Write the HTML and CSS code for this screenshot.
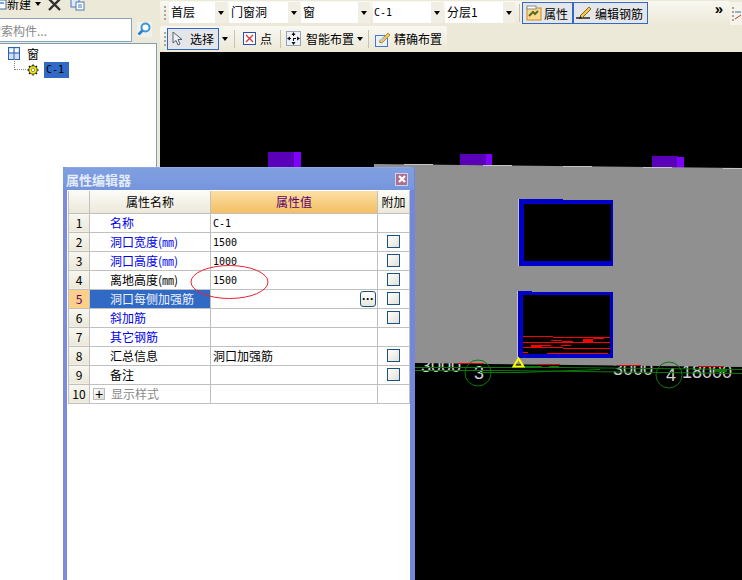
FILE: index.html
```html
<!DOCTYPE html>
<html lang="zh">
<head>
<meta charset="utf-8">
<title>属性编辑器</title>
<link rel="stylesheet" href="styles.css">
</head>
<body>
<div class="app">
  <aside class="left">
    <div class="left-tools">
      <svg class="ico-new" width="7" height="11" viewBox="0 0 7 11"><rect x="-4" y="1" width="10" height="9" fill="#fff" stroke="#3a6ea5"/><rect x="0" y="3" width="4" height="2" fill="#7fa6d8"/></svg>
      <span class="new-label">新建</span>
      <i class="caret caret-new"></i>
      <svg class="ico-del" width="13" height="12" viewBox="0 0 13 12"><path d="M1 0 L12 11 M12 0 L1 11" stroke="#303030" stroke-width="2.4"/></svg>
      <svg class="ico-copy" width="15" height="12" viewBox="0 0 15 12"><rect x="1" y="0" width="8" height="8" fill="#dfe9f7" stroke="#4a78b8"/><rect x="6" y="3" width="8" height="8" fill="#fff" stroke="#4a78b8"/><path d="M8 6h4M8 8h4" stroke="#4a78b8"/></svg>
    </div>
    <div class="search-row">
      <div class="search-box"><span class="search-text">搜索构件...</span></div>
      <button class="search-btn" type="button">
        <svg width="14" height="14" viewBox="0 0 14 14"><circle cx="8.5" cy="5.5" r="4" fill="#fff" stroke="#3d94d6" stroke-width="2"/><path d="M5.5 8.5 L1.5 12.5" stroke="#2f80c2" stroke-width="2.6"/></svg>
      </button>
    </div>
    <div class="tree">
      <div class="tree-row tree-root">
        <svg width="12" height="13" viewBox="0 0 12 13"><rect x=".5" y=".5" width="11" height="12" fill="#cfe0f8" stroke="#2a62b8"/><path d="M6 1v11M1 6h10" stroke="#2a62b8"/><rect x="2" y="2" width="3" height="3" fill="#fff"/><rect x="7" y="2" width="3" height="3" fill="#fff"/></svg>
        <span class="tree-label">窗</span>
      </div>
      <div class="tree-row tree-child">
        <i class="tree-link"></i>
        <svg width="12" height="12" viewBox="0 0 12 12"><path d="M6 .5v11M.5 6h11M2 2l8 8M10 2l-8 8" stroke="#111" stroke-width="1.4" stroke-dasharray="1.500 1"/><circle cx="6" cy="6" r="4.200" fill="#f6f000" stroke="#111" stroke-width=".8"/><circle cx="6" cy="6" r="1.700" fill="#fff" stroke="#555" stroke-width=".6"/></svg>
        <span class="tree-sel">C-1</span>
      </div>
    </div>
  </aside>

  <main class="right">
    <div class="toolbars">
      <div class="bar bar-top">
        <i class="grip"></i>
        <div class="combo combo-1"><span class="combo-text">首层</span><span class="combo-arrow"><i class="caret"></i></span></div>
        <div class="combo combo-2"><span class="combo-text">门窗洞</span><span class="combo-arrow"><i class="caret"></i></span></div>
        <div class="combo combo-3"><span class="combo-text">窗</span><span class="combo-arrow"><i class="caret"></i></span></div>
        <div class="combo combo-4"><span class="combo-text mono">C-1</span><span class="combo-arrow"><i class="caret"></i></span></div>
        <div class="combo combo-5"><span class="combo-text">分层1</span><span class="combo-arrow"><i class="caret"></i></span></div>
        <i class="sep sep-top"></i>
        <div class="toggle toggle-attr">
          <svg width="16" height="16" viewBox="0 0 16 16"><rect x="1" y="3" width="14" height="12" fill="#fbd98e" stroke="#c98a2c"/><rect x="1" y="1" width="9" height="3" fill="#fff" stroke="#8a8a8a"/><path d="M3 11 L7 7 L9 9 L12 6" stroke="#5a6a20" stroke-width="2" fill="none"/></svg>
          <span>属性</span>
        </div>
        <div class="toggle toggle-edit">
          <svg width="18" height="16" viewBox="0 0 18 16"><path d="M1 13 H15" stroke="#222" stroke-width="1.5"/><path d="M5 11 L14 2 L16 4 L7 13 Z" fill="#f2c84b" stroke="#8a6a20"/><path d="M5 11 L4 14 L7 13 Z" fill="#222"/></svg>
          <span>编辑钢筋</span>
        </div>
        <span class="more">»</span>
      </div>
      <div class="bar-tail">
        <i class="grip"></i>
        <svg width="6" height="16" viewBox="0 0 6 16"><path d="M0 6h6" stroke="#3a6ea5"/><path d="M0 13 L6 9" stroke="#c03030"/></svg>
      </div>
      <div class="bar bar-second">
        <i class="grip"></i>
        <div class="toggle toggle-select">
          <svg width="12" height="15" viewBox="0 0 12 15"><path d="M2 1 L2 12 L5 9.500 L7 14 L9 13 L7 8.500 L11 8.500 Z" fill="#eef2f8" stroke="#58606c"/></svg>
          <span>选择</span>
        </div>
        <i class="caret caret-tool"></i>
        <i class="sep"></i>
        <svg class="ico-point" width="13" height="13" viewBox="0 0 13 13"><rect x=".5" y=".5" width="12" height="12" fill="#fff" stroke="#2a4fb0"/><path d="M3 3l7 7M10 3l-7 7" stroke="#d03030" stroke-width="1.2"/></svg>
        <span class="tool-label tool-point">点</span>
        <i class="sep sep-a"></i>
        <svg class="ico-smart" width="15" height="15" viewBox="0 0 15 15"><rect x=".5" y=".5" width="14" height="14" fill="#eef2f8" stroke="#3a5a80" stroke-dasharray="1 1"/><path d="M7.500 2v11M2 7.500h11" stroke="#111" stroke-dasharray="3 2"/><path d="M7.500 1 L5.500 4h4Z M7.500 14 L5.500 11h4Z M1 7.500 L4 5.500v4Z M14 7.500 L11 5.500v4Z" fill="#111"/></svg>
        <span class="tool-label tool-smart">智能布置</span>
        <i class="caret caret-tool"></i>
        <i class="sep sep-b"></i>
        <svg class="ico-exact" width="16" height="16" viewBox="0 0 16 16"><rect x=".5" y="4.500" width="12" height="11" fill="#eaf1fb" stroke="#4a78c8"/><path d="M4 11 L13 2 L15 4 L7 12 Z" fill="#ecc76a" stroke="#b59036"/><path d="M3 10 L8 6 L9 9 Z" fill="#b9c4d0"/></svg>
        <span class="tool-label">精确布置</span>
      </div>
    </div>

    <div class="canvas">
      <svg class="scene" viewBox="160 52 582 528" width="582" height="528">
        <rect x="160" y="52" width="582" height="528" fill="#000"/>
        <g class="dim">
          <text x="421" y="372">3000</text>
          <text x="613" y="375">3000</text>
          <text x="682" y="378">18000</text>
          <text x="474" y="379">3</text>
          <text x="666" y="381">4</text>
        </g>
        <g fill="#5a00b8">
          <rect x="268" y="152" width="27" height="15"/>
          <rect x="460" y="154" width="27" height="11"/>
          <rect x="652" y="156" width="26" height="12"/>
        </g>
        <g fill="#8000ff">
          <rect x="294" y="152" width="7" height="15"/>
          <rect x="486" y="154" width="6" height="11"/>
          <rect x="677" y="157" width="7" height="11"/>
        </g>
        <polygon points="374,164 742,168 742,367 415,363 374,363" fill="#909090"/>
        <g fill="#c4c4c4">
          <rect x="404" y="164" width="29" height="1"/>
          <rect x="483" y="165" width="29" height="1"/>
          <rect x="563" y="166" width="29" height="1"/>
          <rect x="643" y="167" width="29" height="1"/>
          <rect x="723" y="168" width="19" height="1"/>
          <rect x="518" y="199" width="1" height="67"/>
          <rect x="517" y="291" width="1" height="67"/>
          <rect x="564" y="265" width="10" height="1"/>
          <rect x="532" y="357" width="10" height="1"/>
        </g>
        <path d="M519 199 H563 V200 H613 V266 H519 Z" fill="#0000c8"/>
        <rect x="524" y="204" width="87" height="57" fill="#000"/>
        <path d="M518 291 H532 V292 H613 V358 H518 Z" fill="#0000c8"/>
        <rect x="523" y="295" width="87" height="59" fill="#000"/>
        <g stroke="#f00" stroke-width="1" fill="none">
          <path d="M523 336.500H553M553 337.500H610"/>
          <path d="M523 342.500H610"/>
          <path d="M551 340.500H562M583 339.500H593M593 338.500H604"/>
          <path d="M531 346.500H541M541 345.500H551M561 345.500H571"/>
          <path d="M523 347.500H563M563 348.500H610"/>
          <path d="M523 352.500H528M547 353.500H608"/>
        </g>
        <path d="M531 345h11v2h-11z M562 341h11v2h-11z M583 340h10v2h-10z" fill="#f00"/>
        <g stroke="#0a7a0a" fill="none" stroke-width="1">
          <path d="M415 367.500H560L742 369.500"/>
          <path d="M415 370.500H500L742 373.500"/>
          <path d="M480 372.500 H520 L600 369.500"/>
          <circle cx="478" cy="373" r="13"/>
          <circle cx="669" cy="375" r="13"/>
        </g>
        <path d="M525 366h17v2h-17z M549 366h10v2h-10z M715 369h12v3h-12z" fill="#0a7a0a"/>
        <g fill="#e00000">
          <rect x="458" y="363" width="26" height="1"/>
          <rect x="538" y="364" width="22" height="1"/>
          <rect x="618" y="365" width="23" height="1"/>
          <rect x="698" y="366" width="26" height="1"/>
        </g>
        <path d="M518.500 358.500 L513.500 366.500 H523.500 Z" fill="none" stroke="#ffff00" stroke-width="2"/>
      </svg>
    </div>
  </main>

  <section class="dialog">
    <header class="dialog-title">
      <span>属性编辑器</span>
      <span class="dialog-close"><svg width="8" height="8" viewBox="0 0 8 8"><path d="M1 1l6 6M7 1l-6 6" stroke="#fff" stroke-width="2.2"/></svg></span>
    </header>
    <table class="props">
      <colgroup><col class="c-num"><col class="c-name"><col class="c-val"><col class="c-add"></colgroup>
      <thead>
        <tr><th class="corner"></th><th>属性名称</th><th class="th-active">属性值</th><th>附加</th></tr>
      </thead>
      <tbody>
        <tr><td class="num">1</td><td class="name link">名称</td><td class="val mono">C-1</td><td></td></tr>
        <tr><td class="num">2</td><td class="name link">洞口宽度(㎜)</td><td class="val mono">1500</td><td class="add"><i class="check"></i></td></tr>
        <tr><td class="num">3</td><td class="name link">洞口高度(㎜)</td><td class="val mono">1000</td><td class="add"><i class="check"></i></td></tr>
        <tr><td class="num">4</td><td class="name">离地高度(㎜)</td><td class="val mono">1500</td><td class="add"><i class="check"></i></td></tr>
        <tr class="current"><td class="num">5</td><td class="name">洞口每侧加强筋</td><td class="val val-btn"><span class="dots">···</span></td><td class="add"><i class="check"></i></td></tr>
        <tr><td class="num">6</td><td class="name link">斜加筋</td><td class="val"></td><td class="add"><i class="check"></i></td></tr>
        <tr><td class="num">7</td><td class="name link">其它钢筋</td><td class="val"></td><td></td></tr>
        <tr><td class="num">8</td><td class="name">汇总信息</td><td class="val">洞口加强筋</td><td class="add"><i class="check"></i></td></tr>
        <tr><td class="num">9</td><td class="name">备注</td><td class="val"></td><td class="add"><i class="check"></i></td></tr>
        <tr><td class="num">10</td><td class="name muted"><span class="plus">+</span>显示样式</td><td class="val"></td><td></td></tr>
      </tbody>
    </table>
  </section>

  <svg class="mark" width="80" height="38" viewBox="0 0 80 38"><ellipse cx="39.500" cy="18" rx="38.500" ry="16.500" fill="none" stroke="#f02030" stroke-width="1"/></svg>
</div>
</body>
</html>
```
FILE: styles.css
```css
* { box-sizing: border-box; }
html, body { margin: 0; padding: 0; }
body {
  width: 742px;
  height: 580px;
  overflow: hidden;
  background: #ece9d8;
  font-family: "Noto Sans CJK SC", "Liberation Sans", sans-serif;
  font-size: 12px;
  color: #000;
}
.mono { font-family: "DejaVu Sans Mono", "Liberation Mono", monospace; font-size: 10px; }
.app { position: relative; display: flex; width: 742px; height: 580px; overflow: hidden; }

/* left panel */
.left { width: 157px; flex: none; display: flex; flex-direction: column; margin-right: 3px; }
.left-tools { height: 17px; display: flex; align-items: flex-start; overflow: hidden; }
.ico-new { margin-top: -1px; flex: none; }
.new-label { line-height: 12px; margin-top: -2px; width: 24px; flex: none; }
.caret { display: inline-block; width: 0; height: 0; border: 3px solid transparent; border-top: 4px solid #000; border-bottom: 0; flex: none; }
.caret-new { margin: 2px 0 0 4px; }
.ico-del { margin: -1px 0 0 7px; flex: none; }
.ico-copy { margin: -1px 0 0 9px; flex: none; }
.search-row { height: 26px; display: flex; align-items: flex-start; padding-top: 1px; }
.search-box { width: 132px; height: 24px; background: #fff; border: 1px solid #8aa4c0; border-left: 0; overflow: hidden; display: flex; align-items: center; }
.search-text { color: #888; margin-left: -11px; white-space: nowrap; }
.search-btn { width: 15px; height: 15px; margin: 4px 0 0 5px; padding: 0; border: 0; background: #eef1f0; display: flex; }
.tree { flex: 1; background: #fff; border-top: 1px solid #7f9db9; border-right: 1px solid #7f9db9; padding: 2px 0 0 8px; }
.tree-row { display: flex; align-items: center; }
.tree-root { height: 14px; }
.tree-label { margin-left: 7px; }
.tree-child { height: 17px; margin-top: 1px; position: relative; padding-left: 19px; }
.tree-link { position: absolute; left: 6px; top: -2px; width: 12px; height: 11px; border-left: 1px dotted #888; border-bottom: 1px dotted #888; }
.tree-sel { margin-left: 5px; width: 25px; height: 16px; background: #316ac5; font-family: "DejaVu Sans Mono", monospace; font-size: 10px; line-height: 16px; padding-left: 2px; color: #000; }

/* right side */
.right { flex: 1; display: flex; flex-direction: column; min-width: 0; }
.toolbars { height: 52px; position: relative; flex: none; }
.bar { display: flex; align-items: center; background: linear-gradient(#f9f8f2, #ece9d8); border-radius: 2px; }
.bar-top { height: 23px; width: 570px; margin-top: 1px; padding-left: 4px; }
.bar-second { height: 25px; width: 287px; margin-top: 2px; padding-left: 4px; }
.bar-tail { position: absolute; right: 0; top: 2px; width: 12px; height: 23px; display: flex; align-items: center; gap: 1px; background: #f5f3ea; padding-left: 2px; }
.grip { width: 2px; height: 14px; flex: none; background: repeating-linear-gradient(#a8a698 0 2px, transparent 2px 4px); }
.combo { height: 21px; display: flex; flex: none; background: #fff; }
.combo-text { flex: 1; padding-left: 2px; line-height: 20px; white-space: nowrap; overflow: hidden; }
.combo-text.mono { line-height: 21px; padding-left: 1px; }
.combo-arrow { width: 12px; flex: none; background: #f1efe5; display: flex; align-items: center; justify-content: center; }
.combo-1 { width: 58px; margin-left: 3px; margin-right: 2px; }
.combo-2 { width: 71px; margin-right: 1px; }
.combo-3 { width: 69px; margin-right: 3px; }
.combo-4 { width: 70px; margin-right: 2px; }
.combo-5 { width: 70px; }
.sep { width: 1px; height: 18px; background: #c6c3b2; margin: 0 8px 0 6px; flex: none; }
.sep-top { margin: 0 2px 0 4px; }
.toggle { height: 22px; display: flex; align-items: center; gap: 2px; border: 1px solid #316ac5; background: #e4e6ea; flex: none; }
.bar-top .toggle { margin-top: 1px; }
.toggle-attr { width: 51px; padding-left: 3px; }
.toggle-edit { width: 75px; padding-left: 1px; }
.toggle-select { width: 52px; margin-left: 1px; padding-left: 3px; gap: 7px; }
.more { margin-left: auto; margin-right: 7px; font-family: "Liberation Sans", sans-serif; font-size: 15px; font-weight: bold; line-height: 15px; margin-top: -8px; }
.caret-tool { margin-left: 3px; }
.ico-point { flex: none; }
.tool-label { white-space: nowrap; flex: none; margin-left: 5px; }
.tool-point { margin-left: 4px; }
.sep-a { margin: 0 5px 0 8px; }
.sep-b { margin: 0 6px 0 5px; }
.ico-smart, .ico-exact { flex: none; }
.ico-exact + .tool-label { margin-left: 3px; }
.canvas { flex: 1; min-height: 0; }
.scene { display: block; }
.dim text { fill: #cfcfcf; font-family: "Liberation Sans", sans-serif; font-size: 18px; }

/* dialog */
.dialog { position: absolute; left: 63px; top: 167px; width: 352px; height: 413px; background: #fff; border-left: 4px solid #7c8cdc; border-right: 5px solid #7486da; border-top: 1px solid #8ea8e6; }
.dialog-title { height: 22px; margin: 0 -4px 0 -4px; padding-left: 3px; display: flex; align-items: center; justify-content: space-between; background: linear-gradient(#7f9fe0, #7b9ae0 60%, #7494dc); color: #e3ebf9; font-weight: bold; font-size: 13px; position: relative; }
.dialog-close { width: 13px; height: 13px; margin-right: 6px; background: #b06e8e; border: 1px solid #c9d6f2; display: flex; align-items: center; justify-content: center; }
.props { margin: 1px 0 0 1px; width: 341px; table-layout: fixed; border-collapse: collapse; background: #fff; }
.c-num { width: 21px; }
.c-name { width: 121px; }
.c-val { width: 167px; }
.c-add { width: 32px; }
.props th, .props td { border: 1px solid #c0c0c0; padding: 0; height: 19px; line-height: 17px; overflow: hidden; white-space: nowrap; font-weight: normal; }
.props thead th { height: 22px; border-top: 0; background: linear-gradient(#fcfbf6, #ebe8da); text-align: center; }
.props thead .th-active { background: linear-gradient(#fcdfa6, #f3bf62); color: #5c006c; }
.props .num { text-align: center; background: linear-gradient(#f8f7f0, #ebe8da); }
.props .name { padding-left: 20px; }
.link { color: #0000e8; }
.muted { color: #8a8a8a; }
.props .val { padding-left: 2px; }
.props .val.mono { line-height: 15px; padding-top: 2px; }
.val-btn { text-align: right; }
.dots { display: block; width: 16px; height: 16px; margin-left: auto; margin-right: 1px; border: 1px solid #1c5180; border-radius: 3px; background: linear-gradient(#fff, #e8e6da); text-align: center; font-weight: bold; font-size: 12px; line-height: 14px; font-family: "Liberation Sans", sans-serif; }
.add { text-align: center; }
.check { display: block; width: 13px; height: 13px; margin: 0 auto; border: 1px solid #1c5180; background: linear-gradient(135deg, #fff, #e2e0d6); }
.current .num { background: #fdd08a; color: #5c006c; }
.current .name { background: #316ac5; color: #eef3ff; }
.plus { display: inline-block; width: 12px; height: 12px; margin: 3px 6px 0 -17px; vertical-align: top; border: 1px solid #bbb; background: linear-gradient(135deg, #fff, #dcdad0); color: #000; font-family: "Liberation Sans", sans-serif; font-size: 14px; line-height: 10px; text-align: center; }

/* hand-drawn red annotation over the dialog */
.mark { position: absolute; left: 190px; top: 264px; pointer-events: none; }
```
